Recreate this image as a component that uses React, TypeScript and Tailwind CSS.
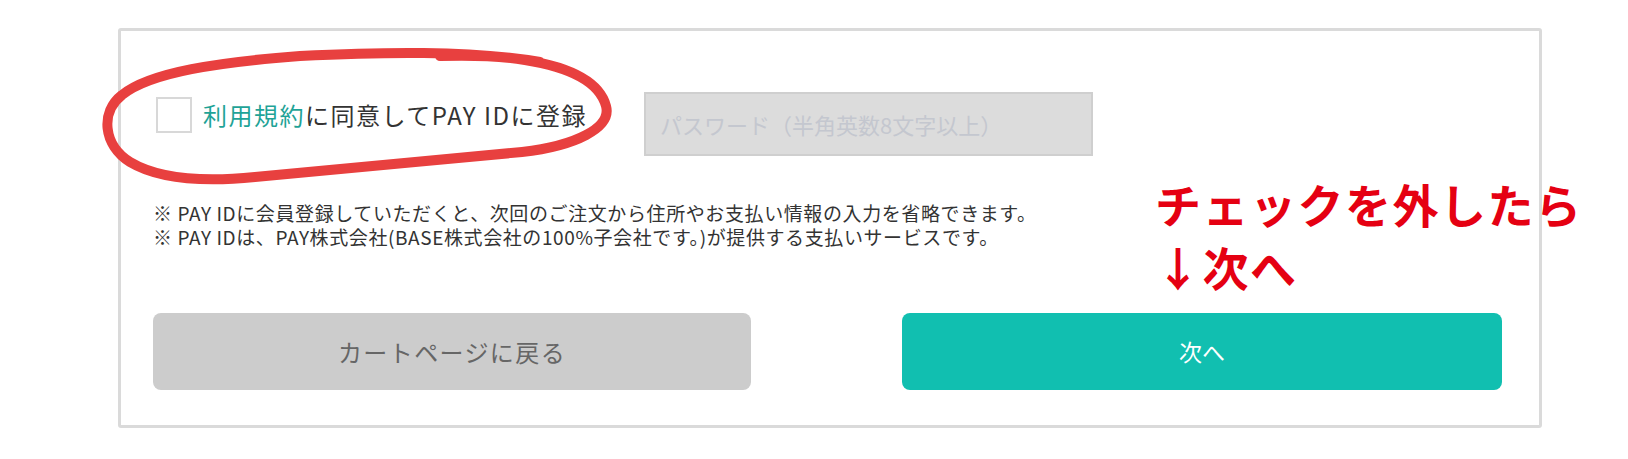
import React from 'react';

const jp = "font-['Noto_Sans_CJK_JP','Noto_Sans',sans-serif]";

function Ellipse() {
	// hand-drawn red circle around the checkbox label
	return (
		<svg
			className="absolute left-0 top-0 pointer-events-none"
			width="1628"
			height="459"
			viewBox="0 0 1628 459"
			fill="none"
		>
			<path
				d="M 540 62 C 470 50, 380 52, 300 56 C 220 62, 150 72, 122 95 C 100 112, 103 145, 130 162 C 160 180, 205 182, 255 177 C 335 170, 435 160, 522 152 C 575 146, 612 128, 606 106 C 600 84, 575 68, 525 60 C 500 56, 470 55, 440 56"
				stroke="#e8403f"
				strokeWidth="10"
				strokeLinecap="round"
				strokeLinejoin="round"
			/>
		</svg>
	);
}

export default function App() {
	return (
		<div className={`relative w-[1628px] h-[459px] bg-white overflow-hidden ${jp}`}>
			<div className="pt-[28px] pl-[118px]">
				<div className="w-[1424px] h-[400px] border-[3px] border-[#dadada] rounded-[3px] pt-[61px] px-[32px]">
					<div className="flex items-start">
						<label className="flex items-center mt-[5px] ml-[3px] w-[488px]">
							<span className="w-[36px] h-[36px] border-2 border-[#d8d8d8] bg-white shrink-0" />
							<span className="ml-[11px] text-[24px] leading-[36px] tracking-[1.5px] text-[#333333] whitespace-nowrap">
								<span className="text-[#1fa397]">利用規約</span>に同意してPAY IDに登録
							</span>
						</label>
						<div className="w-[449px] h-[64px] bg-[#dcdcdc] border-2 border-[#cfcfcf] flex items-center pl-[14px]">
							<span className="text-[22px] text-[#c4c7cf] whitespace-nowrap">パスワード（半角英数8文字以上）</span>
						</div>
					</div>

					<div className="mt-[45px] text-[19px] leading-[24px] tracking-[0.6px] text-[#333333] whitespace-nowrap">
						<p>※ PAY IDに会員登録していただくと、次回のご注文から住所やお支払い情報の入力を省略できます。</p>
						<p>※ PAY IDは、PAY株式会社(BASE株式会社の100%子会社です。)が提供する支払いサービスです。</p>
					</div>

					<div className="mt-[64px] flex justify-between pr-[5px]">
						<button className="w-[598px] h-[77px] rounded-[8px] bg-[#cccccc] text-[#666666] text-[24px] tracking-[1.4px]">
							カートページに戻る
						</button>
						<button className="w-[600px] h-[77px] rounded-[8px] bg-[#11bfb0] text-white text-[23px]">
							次へ
						</button>
					</div>
				</div>
			</div>

			<Ellipse />

			<div className="absolute left-[1155px] top-[172px] text-[46px] leading-[63px] font-bold tracking-[1.5px] text-[#e50012] whitespace-nowrap">
				<p>チェックを外したら</p>
				<p>↓次へ</p>
			</div>
		</div>
	);
}
